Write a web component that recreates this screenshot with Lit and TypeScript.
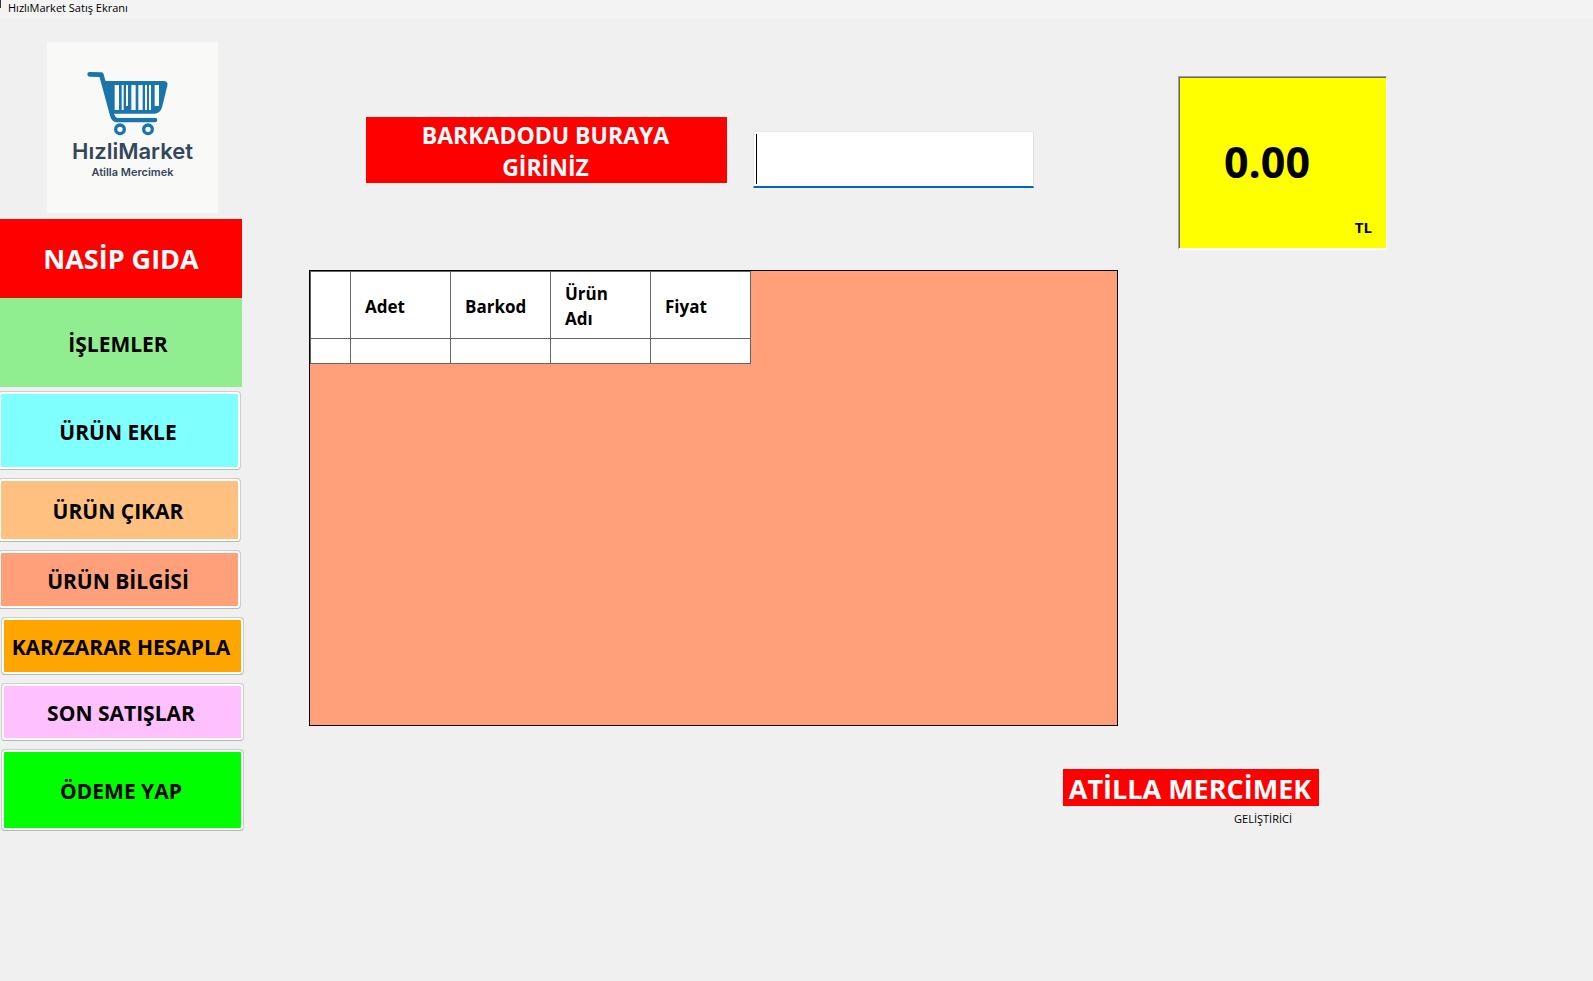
import { LitElement, html, css } from "lit";
import { customElement } from "lit/decorators.js";

interface Action {
  label: string;
  tone: string;
}

const CATALOG_ACTIONS: Action[] = [
  { label: "ÜRÜN EKLE", tone: "add" },
  { label: "ÜRÜN ÇIKAR", tone: "remove" },
  { label: "ÜRÜN BİLGİSİ", tone: "info" },
];

const SALE_ACTIONS: Action[] = [
  { label: "KAR/ZARAR HESAPLA", tone: "profit" },
  { label: "SON SATIŞLAR", tone: "recent" },
  { label: "ÖDEME YAP", tone: "pay" },
];

const COLUMNS = ["Adet", "Barkod", "Ürün Adı", "Fiyat"];

@customElement("market-logo")
class MarketLogo extends LitElement {
  static styles = css`
    :host {
      display: flex;
      flex-direction: column;
      align-items: center;
      box-sizing: border-box;
      width: 171px;
      height: 171px;
      padding-top: 28px;
      background: #f9f9f8;
      color: #33475a;
      font-family: Inter, sans-serif;
    }
    .cart {
      display: block;
      width: 95px;
      height: 68px;
    }
    .name {
      font-size: 22px;
      line-height: 26px;
      font-weight: 600;
    }
    .owner {
      font-size: 11px;
      line-height: 16px;
      font-weight: 600;
    }
  `;

  render() {
    return html`
      <svg class="cart" viewBox="255 210 285 204" aria-hidden="true">
        <path
          d="M269 223 L304 224 L337 346 Q341 360 352 360 L465 360"
          fill="none"
          stroke="#1a75ad"
          stroke-width="14"
          stroke-linecap="round"
          stroke-linejoin="round"
        />
        <path
          d="M311 243 H492 Q505 244 502 257 L486 322 Q481 341 462 341 H338 Z"
          fill="#1a75ad"
        />
        <g fill="#f9f9f8">
          <rect x="344" y="255" width="13" height="75" />
          <rect x="365" y="255" width="6" height="75" />
          <rect x="378" y="255" width="6" height="63" />
          <rect x="394" y="255" width="13" height="75" />
          <rect x="415" y="255" width="13" height="75" />
          <rect x="435" y="255" width="6" height="75" />
          <rect x="447" y="255" width="6" height="75" />
          <rect x="464" y="255" width="13" height="63" />
          <path d="M343 342 H470 V353 H351 Q345 350 343 342 Z" />
        </g>
        <g fill="#f9f9f8" stroke="#1a75ad" stroke-width="10">
          <circle cx="360" cy="388" r="13" />
          <circle cx="444" cy="388" r="13" />
        </g>
      </svg>
      <div class="name">HızliMarket</div>
      <div class="owner">Atilla Mercimek</div>
    `;
  }
}

@customElement("app-root")
class AppRoot extends LitElement {
  static styles = css`
    :host {
      display: block;
      min-height: 100vh;
      background: #f0f0f0;
      color: #000;
      font-family: "Open Sans", "Noto Sans", sans-serif;
      overflow-x: hidden;
    }
    .titlebar {
      display: flex;
      align-items: flex-start;
      gap: 7px;
      height: 19px;
      background: #f3f3f3;
      font-size: 11px;
      line-height: 16px;
    }
    .title-mark {
      width: 1px;
      height: 8px;
      background: #333;
    }
    .layout {
      display: grid;
      grid-template-columns: 244px minmax(0, 1fr);
    }
    .sidebar {
      padding-top: 23px;
    }
    .logo {
      margin: 0 0 6px 47px;
    }
    .store,
    .section {
      display: flex;
      align-items: center;
      justify-content: center;
      box-sizing: border-box;
      width: 242px;
      margin: 0;
      font-weight: 700;
    }
    .store {
      height: 79px;
      background: #f00;
      color: #fff;
      font-size: 27px;
    }
    .section {
      height: 89px;
      padding: 2px 6px 0 0;
      background: #90ee90;
      font-size: 21px;
    }
    .actions {
      display: flex;
      flex-direction: column;
      gap: 8px;
      width: 243px;
    }
    .catalog {
      margin: 4px 0 8px -2px;
    }
    .sale {
      margin-left: 1px;
    }
    .action {
      box-sizing: border-box;
      width: 100%;
      height: 58px;
      padding: 2px 3px 0 0;
      border: 1px solid #cdcdcd;
      border-bottom-color: #b8b8b8;
      border-radius: 4px;
      box-shadow: inset 0 0 0 2px #fff;
      color: #000;
      font-family: inherit;
      font-size: 21px;
      font-weight: 700;
      white-space: nowrap;
    }
    .add {
      height: 79px;
      background: #80ffff;
    }
    .remove {
      height: 64px;
      background: #ffc080;
    }
    .info {
      height: 59px;
      background: #ffa07a;
    }
    .profit {
      background: #ffa500;
    }
    .recent {
      background: #ffc0ff;
    }
    .pay {
      height: 82px;
      background: #0f0;
    }
    .main {
      padding: 57px 206px 24px 65px;
    }
    .top {
      display: grid;
      grid-template-columns: minmax(0, 1fr) 209px;
      gap: 60px;
    }
    .entry {
      display: flex;
      align-items: flex-start;
      gap: 26px;
      padding: 41px 84px 0 57px;
    }
    .entry-label {
      flex: 1;
      padding: 2px 2px 0 0;
      background: #f00;
      color: #fff;
      font-size: 23px;
      line-height: 32px;
      font-weight: 700;
      text-align: center;
    }
    .entry-field {
      position: relative;
      width: 281px;
      margin-top: 14px;
    }
    .entry-field::after {
      content: "";
      position: absolute;
      left: 3px;
      top: 3px;
      bottom: 4px;
      width: 1px;
      background: #000;
    }
    .barcode {
      display: block;
      box-sizing: border-box;
      width: 100%;
      height: 57px;
      padding: 0 6px;
      border: 1px solid #e9e9e9;
      border-right-color: #dde1e6;
      border-bottom: 2px solid #0067c0;
      outline: none;
      background: #fff;
      caret-color: transparent;
      font-family: inherit;
      font-size: 26px;
    }
    .total {
      display: flex;
      flex-direction: column;
      box-sizing: border-box;
      height: 174px;
      padding: 55px 14px 0 45px;
      border: 1px solid #fff;
      border-bottom-width: 2px;
      border-top-color: #a0a0a0;
      border-left-color: #a0a0a0;
      box-shadow: inset 1px 1px 0 #696969;
      background: #ff0;
      font-weight: 700;
    }
    .amount {
      font-size: 43px;
      line-height: 60px;
    }
    .currency {
      margin-top: 24px;
      font-size: 15px;
      line-height: 22px;
      text-align: right;
    }
    .cart-panel {
      box-sizing: border-box;
      min-height: 456px;
      margin: 20px 269px 0 0;
      border: 1px solid #000;
      background: #ffa07a;
    }
    .cart-table {
      border-collapse: collapse;
      table-layout: fixed;
      width: 441px;
      background: #fff;
    }
    .cart-table th,
    .cart-table td {
      box-sizing: border-box;
      width: 100px;
      border: 1px solid #646464;
    }
    .cart-table .marker {
      width: 40px;
      padding: 0;
    }
    .cart-table th {
      height: 67px;
      padding: 2px 40px 0 14px;
      font-size: 17px;
      line-height: 25px;
      text-align: left;
    }
    .cart-table td {
      height: 25px;
      padding: 0;
    }
    .cart-table .wide {
      padding-right: 14px;
    }
    .credit {
      display: flex;
      flex-direction: column;
      align-items: flex-end;
      margin: 43px 68px 0 0;
    }
    .developer {
      box-sizing: border-box;
      width: 256px;
      padding: 2px 2px 0 0;
      background: #f00;
      color: #fff;
      font-size: 27px;
      line-height: 35px;
      font-weight: 700;
      text-align: center;
      white-space: nowrap;
    }
    .role {
      padding: 5px 27px 0 0;
      font-size: 11px;
      line-height: 16px;
    }
  `;

  private renderActions(actions: Action[]) {
    return actions.map(
      (a) => html`<button type="button" class="action ${a.tone}">${a.label}</button>`
    );
  }

  render() {
    return html`
      <header class="titlebar">
        <span class="title-mark"></span>
        <span>HızlıMarket Satış Ekranı</span>
      </header>
      <div class="layout">
        <aside class="sidebar">
          <market-logo class="logo"></market-logo>
          <h1 class="store">NASİP GIDA</h1>
          <h2 class="section">İŞLEMLER</h2>
          <div class="actions catalog">${this.renderActions(CATALOG_ACTIONS)}</div>
          <div class="actions sale">${this.renderActions(SALE_ACTIONS)}</div>
        </aside>
        <main class="main">
          <div class="top">
            <div class="entry">
              <label class="entry-label" for="barcode">BARKADODU BURAYA<br />GİRİNİZ</label>
              <div class="entry-field">
                <input class="barcode" id="barcode" type="text" autocomplete="off" />
              </div>
            </div>
            <div class="total">
              <span class="amount">0.00</span>
              <span class="currency">TL</span>
            </div>
          </div>
          <div class="cart-panel">
            <table class="cart-table">
              <thead>
                <tr>
                  <th class="marker"></th>
                  ${COLUMNS.map(
                    (c) => html`<th scope="col" class=${c === "Barkod" ? "wide" : ""}>${c}</th>`
                  )}
                </tr>
              </thead>
              <tbody>
                <tr>
                  <td class="marker"></td>
                  ${COLUMNS.map(() => html`<td></td>`)}
                </tr>
              </tbody>
            </table>
          </div>
          <footer class="credit">
            <div class="developer">ATİLLA MERCİMEK</div>
            <div class="role">GELİŞTİRİCİ</div>
          </footer>
        </main>
      </div>
    `;
  }
}
